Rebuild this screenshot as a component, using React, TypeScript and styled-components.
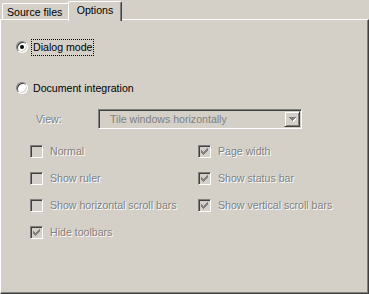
import React from 'react'
import styled, { createGlobalStyle } from 'styled-components'

const GlobalStyle = createGlobalStyle`
  body {
    margin: 0;
    background: #d4d0c8;
  }
`

const Window = styled.div`
  width: 369px;
  height: 294px;
  display: flex;
  flex-direction: column;
  background: #d4d0c8;
  font-family: 'Liberation Sans', Arial, sans-serif;
  font-size: 10.6px;
  color: #000;
  box-sizing: border-box;
`

const TabStrip = styled.div`
  display: flex;
  align-items: flex-start;
  height: 19px;
  padding-left: 2px;
  position: relative;
  z-index: 1;
`

const Tab = styled.div<{ $active?: boolean }>`
  box-sizing: border-box;
  height: ${(p) => (p.$active ? 20 : 16)}px;
  margin-top: ${(p) => (p.$active ? 1 : 3)}px;
  margin-left: ${(p) => (p.$active ? -2 : 0)}px;
  width: ${(p) => (p.$active ? 54 : 68)}px;
  padding: ${(p) => (p.$active ? '2px 0 0 0' : '2px 0 0 4px')};
  text-align: ${(p) => (p.$active ? 'center' : 'left')};
  line-height: 13px;
  background: #d4d0c8;
  border-top: 1px solid #fff;
  border-left: 1px solid #fff;
  border-right: 1px solid #404040;
  border-top-left-radius: 2px;
  border-top-right-radius: 2px;
  box-shadow: inset -1px 0 #808080;
  position: relative;
  z-index: ${(p) => (p.$active ? 2 : 0)};
`

const Panel = styled.div`
  flex: 1;
  box-sizing: border-box;
  border: 1px solid;
  border-color: #fff #404040 #404040 #fff;
  box-shadow: inset -1px -1px #808080;
  padding: 18px 0 0 15px;
  display: flex;
  flex-direction: column;
`

const RadioRow = styled.div<{ $gap: number }>`
  display: flex;
  align-items: center;
  height: 18px;
  margin-top: ${(p) => p.$gap}px;
`

const RadioCircle = styled.span<{ $checked?: boolean }>`
  box-sizing: border-box;
  width: 12px;
  height: 12px;
  border-radius: 50%;
  border: 1px solid;
  border-color: #808080 #fff #fff #808080;
  background: #fff;
  box-shadow: inset 1px 1px #404040, inset -1px -1px #d4d0c8;
  display: flex;
  align-items: center;
  justify-content: center;
  flex-shrink: 0;

  &::after {
    content: '';
    width: 4px;
    height: 4px;
    border-radius: 50%;
    background: ${(p) => (p.$checked ? '#000' : 'transparent')};
  }
`

const RadioLabel = styled.span<{ $focused?: boolean }>`
  margin-left: 3px;
  padding: 0 1px;
  line-height: 15px;
  border: 1px dotted ${(p) => (p.$focused ? '#000' : 'transparent')};
`

const ViewRow = styled.div`
  display: flex;
  align-items: center;
  margin-top: 12px;
  padding-left: 20px;
`

const DisabledText = styled.span`
  color: #808080;
  text-shadow: 1px 1px 0 #fff;
  white-space: nowrap;
`

const ViewLabel = styled(DisabledText)`
  width: 62px;
  flex-shrink: 0;
`

const Select = styled.div`
  box-sizing: border-box;
  width: 204px;
  height: 20px;
  border: 1px solid;
  border-color: #808080 #fff #fff #808080;
  box-shadow: inset 1px 1px #404040, inset -1px -1px #d4d0c8;
  display: flex;
  align-items: center;
  padding: 1px 1px 1px 11px;
`

const SelectText = styled.span`
  flex: 1;
  color: #808080;
  white-space: nowrap;
`

const DropButton = styled.div`
  box-sizing: border-box;
  width: 16px;
  height: 16px;
  background: #d4d0c8;
  border: 1px solid;
  border-color: #d4d0c8 #404040 #404040 #d4d0c8;
  box-shadow: inset 1px 1px #fff, inset -1px -1px #808080;
  display: flex;
  align-items: center;
  justify-content: center;
`

const CheckGrid = styled.div`
  display: grid;
  grid-template-columns: 168px 1fr;
  grid-auto-rows: 16px;
  row-gap: 11px;
  margin-top: 14px;
  padding-left: 14px;
`

const CheckRow = styled.div<{ $col: number; $row: number }>`
  grid-column: ${(p) => p.$col};
  grid-row: ${(p) => p.$row};
  display: flex;
  align-items: center;
`

const CheckBox = styled.span`
  box-sizing: border-box;
  width: 13px;
  height: 13px;
  border: 1px solid;
  border-color: #808080 #fff #fff #808080;
  box-shadow: inset 1px 1px #404040, inset -1px -1px #d4d0c8;
  background: #d4d0c8;
  display: flex;
  align-items: center;
  justify-content: center;
  margin-right: 7px;
  flex-shrink: 0;
`

const checkPixels = [
  [6, 0], [5, 1], [6, 1], [0, 2], [4, 2], [5, 2], [6, 2],
  [0, 3], [1, 3], [3, 3], [4, 3], [5, 3], [0, 4], [1, 4], [2, 4], [3, 4], [4, 4],
  [1, 5], [2, 5], [3, 5], [2, 6],
]

const CheckMark = () => (
  <svg width="7" height="7" viewBox="0 0 7 7" shapeRendering="crispEdges">
    {checkPixels.map(([x, y]) => (
      <rect key={`${x}-${y}`} x={x} y={y} width="1" height="1" fill="#808080" />
    ))}
  </svg>
)

const DropArrow = () => (
  <svg width="7" height="5" viewBox="0 0 7 5" shapeRendering="crispEdges">
    <path d="M1 1h7l-3.5 4z" fill="#fff" />
    <path d="M0 0h7l-3.5 4z" fill="#808080" />
  </svg>
)

const options = [
  { label: 'Normal', checked: false, col: 1, row: 1 },
  { label: 'Show ruler', checked: false, col: 1, row: 2 },
  { label: 'Show horizontal scroll bars', checked: false, col: 1, row: 3 },
  { label: 'Hide toolbars', checked: true, col: 1, row: 4 },
  { label: 'Page width', checked: true, col: 2, row: 1 },
  { label: 'Show status bar', checked: true, col: 2, row: 2 },
  { label: 'Show vertical scroll bars', checked: true, col: 2, row: 3 },
]

const App = () => (
  <>
    <GlobalStyle />
    <Window>
      <TabStrip>
        <Tab>Source files</Tab>
        <Tab $active>Options</Tab>
      </TabStrip>
      <Panel>
        <RadioRow $gap={0}>
          <RadioCircle $checked />
          <RadioLabel $focused>Dialog mode</RadioLabel>
        </RadioRow>
        <RadioRow $gap={23}>
          <RadioCircle />
          <RadioLabel>Document integration</RadioLabel>
        </RadioRow>
        <ViewRow>
          <ViewLabel>View:</ViewLabel>
          <Select>
            <SelectText>Tile windows horizontally</SelectText>
            <DropButton>
              <DropArrow />
            </DropButton>
          </Select>
        </ViewRow>
        <CheckGrid>
          {options.map((o) => (
            <CheckRow key={o.label} $col={o.col} $row={o.row}>
              <CheckBox>{o.checked && <CheckMark />}</CheckBox>
              <DisabledText>{o.label}</DisabledText>
            </CheckRow>
          ))}
        </CheckGrid>
      </Panel>
    </Window>
  </>
)

export default App
